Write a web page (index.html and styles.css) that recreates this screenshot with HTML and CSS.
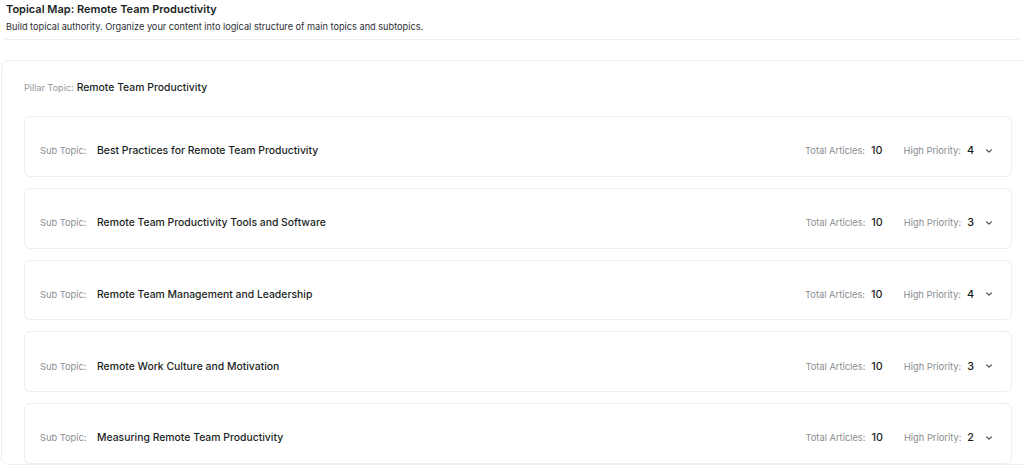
FILE: index.html
```html
<!DOCTYPE html>
<html>
<head>
<meta charset="utf-8">
<link rel="stylesheet" href="styles.css">
</head>
<body>
<header class="page-header">
  <h1 class="page-title">Topical Map: Remote Team Productivity</h1>
  <p class="page-desc">Build topical authority. Organize your content into logical structure of main topics and subtopics.</p>
</header>
<main class="map-card">
  <div class="pillar"><span class="label">Pillar Topic:</span> <span class="pillar-value">Remote Team Productivity</span></div>
  <div class="subtopics">
    <div class="sub-card">
      <div class="sub-left"><span class="label">Sub Topic:</span><span class="sub-title">Best Practices for Remote Team Productivity</span></div>
      <div class="sub-right"><span class="label">Total Articles:</span><span class="num">10</span><span class="label hp">High Priority:</span><span class="num">4</span><svg class="chev" viewBox="0 0 10 10" width="10" height="10"><path d="M2.5 3.8 L5 6.2 L7.5 3.8" fill="none" stroke="#444" stroke-width="1.1" stroke-linecap="round" stroke-linejoin="round"/></svg></div>
    </div>
    <div class="sub-card">
      <div class="sub-left"><span class="label">Sub Topic:</span><span class="sub-title">Remote Team Productivity Tools and Software</span></div>
      <div class="sub-right"><span class="label">Total Articles:</span><span class="num">10</span><span class="label hp">High Priority:</span><span class="num">3</span><svg class="chev" viewBox="0 0 10 10" width="10" height="10"><path d="M2.5 3.8 L5 6.2 L7.5 3.8" fill="none" stroke="#444" stroke-width="1.1" stroke-linecap="round" stroke-linejoin="round"/></svg></div>
    </div>
    <div class="sub-card">
      <div class="sub-left"><span class="label">Sub Topic:</span><span class="sub-title">Remote Team Management and Leadership</span></div>
      <div class="sub-right"><span class="label">Total Articles:</span><span class="num">10</span><span class="label hp">High Priority:</span><span class="num">4</span><svg class="chev" viewBox="0 0 10 10" width="10" height="10"><path d="M2.5 3.8 L5 6.2 L7.5 3.8" fill="none" stroke="#444" stroke-width="1.1" stroke-linecap="round" stroke-linejoin="round"/></svg></div>
    </div>
    <div class="sub-card">
      <div class="sub-left"><span class="label">Sub Topic:</span><span class="sub-title">Remote Work Culture and Motivation</span></div>
      <div class="sub-right"><span class="label">Total Articles:</span><span class="num">10</span><span class="label hp">High Priority:</span><span class="num">3</span><svg class="chev" viewBox="0 0 10 10" width="10" height="10"><path d="M2.5 3.8 L5 6.2 L7.5 3.8" fill="none" stroke="#444" stroke-width="1.1" stroke-linecap="round" stroke-linejoin="round"/></svg></div>
    </div>
    <div class="sub-card">
      <div class="sub-left"><span class="label">Sub Topic:</span><span class="sub-title">Measuring Remote Team Productivity</span></div>
      <div class="sub-right"><span class="label">Total Articles:</span><span class="num">10</span><span class="label hp">High Priority:</span><span class="num">2</span><svg class="chev" viewBox="0 0 10 10" width="10" height="10"><path d="M2.5 3.8 L5 6.2 L7.5 3.8" fill="none" stroke="#444" stroke-width="1.1" stroke-linecap="round" stroke-linejoin="round"/></svg></div>
    </div>
  </div>
</main>
</body>
</html>
```
FILE: styles.css
```css
* { box-sizing: border-box; }
html, body { margin: 0; padding: 0; background: #fff; }
body {
  font-family: Inter, "Noto Sans", sans-serif;
  color: #1f2328;
  overflow: hidden;
  width: 1024px;
  height: 470px;
}
.page-header {
  margin: 0 5px;
  padding: 1px 0 0 1px;
  height: 40px;
  border-bottom: 1px solid #edf0f2;
}
.page-title {
  margin: 0;
  font-size: 11px;
  font-weight: 600;
  line-height: 16px;
  color: #1b1f24;
}
.page-desc {
  margin: 3px 0 0;
  font-size: 9.2px;
  line-height: 14px;
  color: #2b2f33;
}
.map-card {
  margin: 20px 0 0 1px;
  width: 1040px;
  border: 1px solid #eceef0;
  border-radius: 8px;
  padding: 20px 0 0 22px;
}
.pillar {
  font-size: 10.4px;
  line-height: 14px;
  color: #1b1f24;
}
.label {
  font-size: 9.3px;
  color: #8a8d91;
}
.pillar .label { font-size: 9.1px; color: #95989c; }
.pillar-value { font-weight: 500; }
.subtopics {
  margin-top: 21px;
  display: flex;
  flex-direction: column;
  gap: 11px;
  width: 988px;
}
.sub-card {
  height: 60.75px;
  border: 1px solid #eceef0;
  border-radius: 6px;
  display: flex;
  align-items: center;
  justify-content: space-between;
  padding: 9px 17px 0 15px;
}
.sub-left { display: flex; align-items: center; }
.sub-left .label { width: 57px; }
.sub-title {
  font-size: 10.4px;
  font-weight: 500;
  color: #1b1f24;
}
.sub-right { display: flex; align-items: center; }
.num {
  font-size: 10.8px;
  font-weight: 500;
  color: #1b1f24;
  margin-left: 6px;
}
.label.hp { margin-left: 21px; }
.chev { margin-left: 10px; }
```
